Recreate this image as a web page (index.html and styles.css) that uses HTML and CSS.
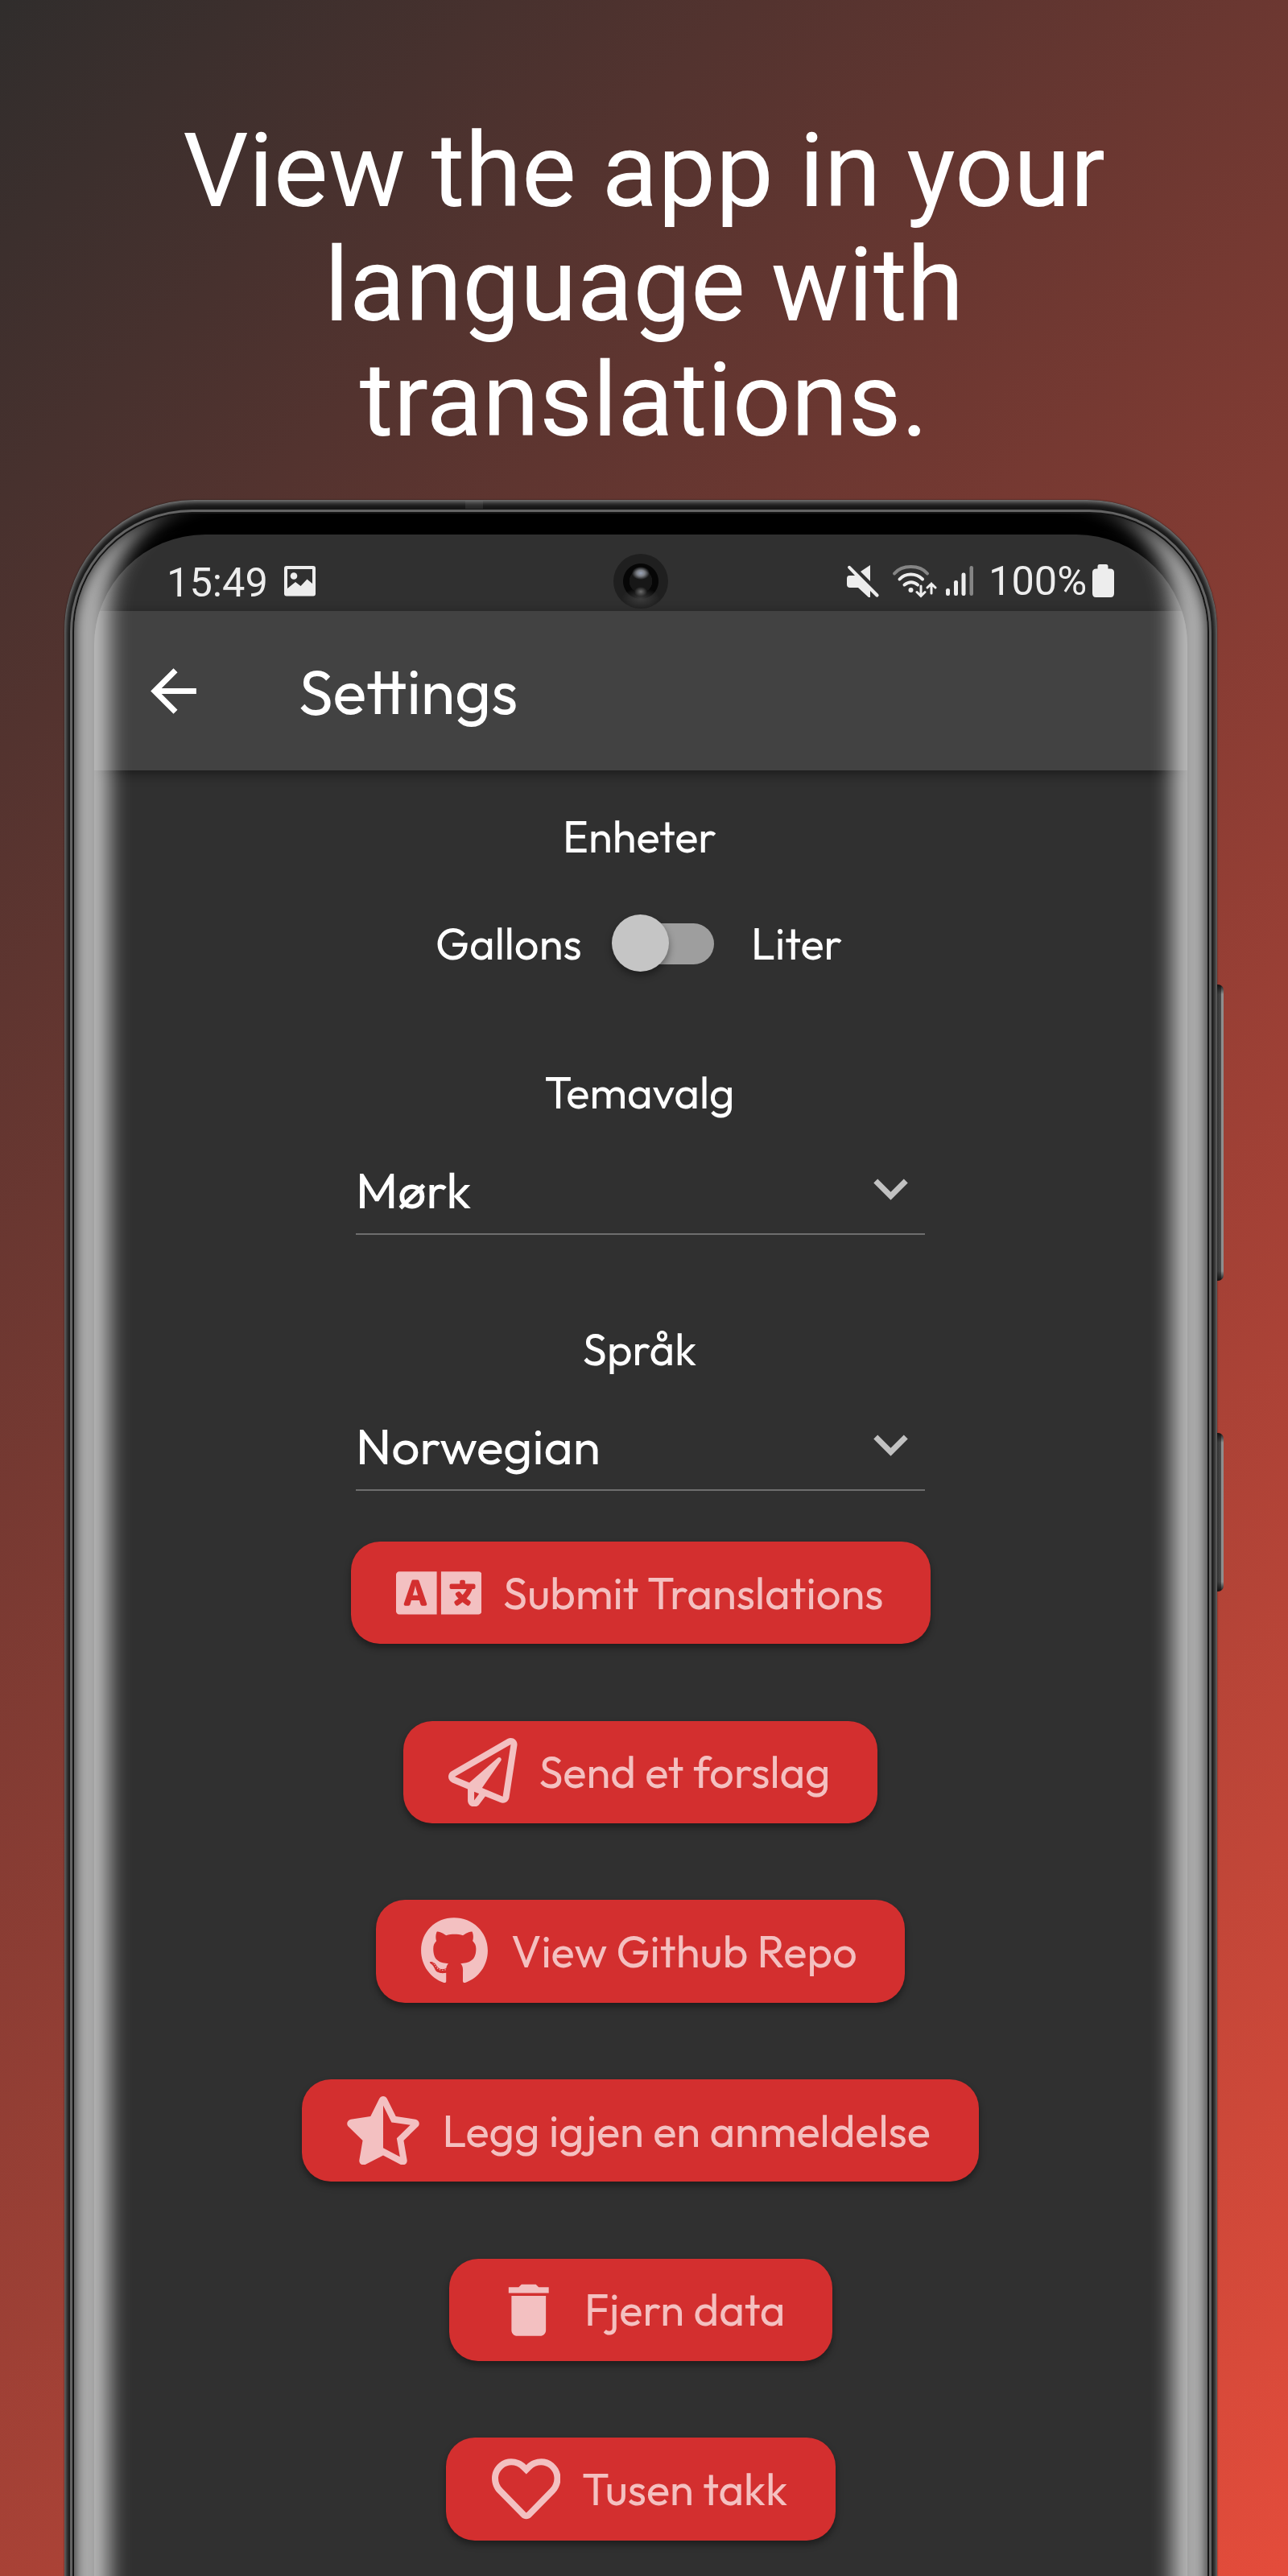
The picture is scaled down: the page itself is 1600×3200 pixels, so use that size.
FILE: index.html
```html
<!DOCTYPE html>
<html lang="no">
<head>
<meta charset="utf-8">
<title>Settings</title>
<link rel="stylesheet" href="styles.css">
</head>
<body>
<main class="page">
  <h1 class="headline">View the app in your<br>language with<br>translations.</h1>

  <div class="phone">
    <i class="antenna"></i>
    <i class="side-key side-key-volume"></i>
    <i class="side-key side-key-power"></i>
    <div class="frame"><div class="rim"><div class="rim-gap"><div class="bezel">
      <div class="screen">
        <header class="status-bar">
          <span class="clock">15:49</span>
          <svg class="status-image" viewBox="0 0 39 38"><path fill-rule="evenodd" d="M3 0h33a3 3 0 0 1 3 3v31.500a3 3 0 0 1-3 3H3a3 3 0 0 1-3-3V3a3 3 0 0 1 3-3zM4 4v24l10-8 6.500 5 8-8.500L35 22V4z"/><circle cx="12" cy="12.500" r="4.300"/></svg>
          <svg class="status-mute" viewBox="0 0 42 42"><path d="M30 1v20L18 9zM4 14h7L2.500 5a1.800 1.800 0 0 1 3-2.500L40 37a1.900 1.900 0 0 1-3 3l-7-7v8h-2L15 29H5q-4 0-4-4v-7q0-4 3-4z"/></svg>
          <svg class="status-wifi" viewBox="0 0 56 42"><g fill="none" stroke="#ededed" stroke-width="4" stroke-linecap="round"><path stroke="#858585" d="M3 11.500Q10 3 23.500 3T44 11.500"/><path d="M9.500 18.500Q15 12.500 23.500 12.500T38 18.500"/><path d="M15.500 25.500Q24 19 32 25.500"/><path stroke-width="3" d="M36 27v12M31 34.500l5 5 5-5M49 36V24M44 29l5-5 5 5"/></g><circle cx="23.500" cy="32" r="3"/></svg>
          <svg class="status-signal" viewBox="0 0 36 38"><rect x="1" y="28" width="5" height="9" rx="2.200"/><rect x="11" y="18" width="5" height="19" rx="2.200"/><rect x="20.500" y="8.500" width="5" height="28.500" rx="2.200"/><rect x="30.500" y="0" width="4.500" height="37" rx="2.200" fill="#858585"/></svg>
          <span class="charge">100%</span>
          <svg class="status-battery" viewBox="0 0 27 41"><path d="M9 0h8q2.500 0 2.500 2.500V5.500H22q5 0 5 4.500v26q0 5-4.500 5h-18Q0 41 0 36V10q0-4.500 5-4.500h1.500V2.500Q6.500 0 9 0z"/></svg>
          <i class="camera"></i>
        </header>

        <nav class="app-bar">
          <svg class="back" viewBox="0 0 24 24"><path d="M20 11H7.830l5.590-5.590L12 4l-8 8 8 8 1.410-1.410L7.830 13H20v-2z"/></svg>
          <span class="app-title">Settings</span>
        </nav>

        <section class="settings">
          <p class="label label-units">Enheter</p>
          <div class="unit-row">
            <span class="unit unit-left">Gallons</span>
            <span class="switch"><i class="thumb"></i></span>
            <span class="unit unit-right">Liter</span>
          </div>

          <p class="label label-theme">Temavalg</p>
          <div class="select">
            <span>Mørk</span>
            <svg class="chevron" viewBox="0 0 24 24"><path d="M16.590 8.590L12 13.170 7.410 8.590 6 10l6 6 6-6z"/></svg>
          </div>

          <p class="label label-language">Språk</p>
          <div class="select">
            <span>Norwegian</span>
            <svg class="chevron" viewBox="0 0 24 24"><path d="M16.590 8.590L12 13.170 7.410 8.590 6 10l6 6 6-6z"/></svg>
          </div>

          <div class="actions">
            <a class="action action-translate">
              <svg class="icon icon-wide" viewBox="0 0 640 512"><path d="M152.100 236.200c-3.500-12.100-7.800-33.200-7.800-33.200h-.5s-4.300 21.100-7.800 33.200l-11.100 37.500H163zM616 96H336v320h280c13.300 0 24-10.700 24-24V120c0-13.300-10.700-24-24-24zm-24 120c0 6.600-5.400 12-12 12h-11.400c-6.900 23.600-21.700 47.400-42.700 69.900 8.400 6.400 17.100 12.500 26.100 18 5.500 3.400 7.300 10.500 4.100 16.200l-7.900 13.900c-3.400 5.900-10.900 7.800-16.700 4.300-12.600-7.800-24.500-16.100-35.400-24.900-10.900 8.700-22.700 17.100-35.400 24.900-5.800 3.500-13.300 1.600-16.700-4.300l-7.900-13.900c-3.200-5.600-1.400-12.800 4.200-16.200 9.300-5.700 18-11.700 26.100-18-7.900-8.400-14.900-17-21-25.700-4-5.700-2.200-13.600 3.700-17.100l6.500-3.900 7.300-4.300c5.400-3.200 12.400-1.700 16 3.400 5 7 10.800 14 17.400 20.900 13.500-14.200 23.800-28.900 30-43.200H412c-6.600 0-12-5.400-12-12v-16c0-6.600 5.400-12 12-12h64v-16c0-6.600 5.400-12 12-12h16c6.600 0 12 5.400 12 12v16h64c6.600 0 12 5.400 12 12zM0 120v272c0 13.300 10.700 24 24 24h280V96H24c-13.300 0-24 10.700-24 24zm58.900 216.100L116.400 167c1.700-4.900 6.200-8.100 11.400-8.100h32.500c5.100 0 9.700 3.300 11.400 8.100l57.500 169.100c2.600 7.800-3.100 15.900-11.400 15.900h-22.900a12 12 0 0 1-11.500-8.600l-9.400-31.900h-60.200l-9.100 31.800c-1.500 5.100-6.200 8.700-11.500 8.700H70.300c-8.200 0-14-8.100-11.400-15.900z"/></svg>
              <span>Submit Translations</span>
            </a>
            <a class="action action-suggest">
              <svg class="icon" viewBox="0 0 512 512"><path d="M440 6.500L24 246.400c-34.400 19.900-31.100 70.800 5.700 85.900L144 379.600V464c0 46.400 59.200 65.500 86.600 28.600l43.800-59.100 111.900 46.200c5.900 2.400 12.100 3.600 18.300 3.600 8.200 0 16.300-2.100 23.600-6.200 12.800-7.200 21.600-20 23.900-34.500l59.400-387.200c6.100-40.100-36.900-68.800-71.500-48.900zM192 464v-64.600l36.600 15.100L192 464zm212.600-28.700l-153.800-63.500L391 169.500c10.700-15.500-9.500-33.500-23.700-21.200L155.800 332.600 48 288 464 48l-59.400 387.300z"/></svg>
              <span>Send et forslag</span>
            </a>
            <a class="action action-github">
              <svg class="icon icon-github" viewBox="0 0 496 512"><path d="M165.900 397.400c0 2-2.300 3.600-5.200 3.600-3.300.3-5.600-1.300-5.600-3.600 0-2 2.300-3.600 5.200-3.600 3-.3 5.600 1.300 5.600 3.600zm-31.100-4.500c-.7 2 1.300 4.300 4.300 4.900 2.600 1 5.600 0 6.200-2s-1.300-4.300-4.300-5.200c-2.600-.7-5.500.3-6.200 2.300zm44.200-1.700c-2.900.7-4.900 2.600-4.600 4.900.3 2 2.900 3.300 5.900 2.600 2.900-.7 4.900-2.600 4.600-4.600-.3-1.900-3-3.200-5.900-2.900zM244.800 8C106.100 8 0 113.300 0 252c0 110.900 69.800 205.800 169.500 239.200 12.800 2.300 17.300-5.600 17.300-12.100 0-6.200-.3-40.400-.3-61.400 0 0-70 15-84.700-29.800 0 0-11.400-29.100-27.800-36.600 0 0-22.900-15.700 1.600-15.400 0 0 24.900 2 38.600 25.800 21.900 38.600 58.600 27.500 72.900 20.900 2.300-16 8.800-27.100 16-33.700-55.900-6.200-112.300-14.300-112.300-110.500 0-27.500 7.600-41.300 23.600-58.900-2.600-6.500-11.100-33.300 2.600-67.900 20.900-6.500 69 27 69 27 20-5.600 41.500-8.500 62.800-8.500s42.800 2.900 62.800 8.500c0 0 48.100-33.600 69-27 13.700 34.700 5.200 61.400 2.600 67.900 16 17.700 25.800 31.500 25.800 58.900 0 96.500-58.900 104.200-114.800 110.500 9.200 7.900 17 22.900 17 46.400 0 33.700-.3 75.400-.3 83.600 0 6.500 4.600 14.400 17.300 12.100C428.200 457.800 496 362.900 496 252 496 113.300 383.500 8 244.800 8zM97.200 352.900c-1.300 1-1 3.300.7 5.200 1.600 1.600 3.900 2.300 5.200 1 1.300-1 1-3.300-.7-5.200-1.600-1.600-3.900-2.300-5.200-1zm-10.800-8.100c-.7 1.300.3 2.900 2.300 3.900 1.600 1 3.600.7 4.300-.7.7-1.300-.3-2.900-2.300-3.900-2-.6-3.600-.3-4.300.7zm32.400 35.600c-1.600 1.300-1 4.300 1.300 6.200 2.300 2.300 5.200 2.600 6.500 1 1.300-1.300.7-4.300-1.300-6.200-2.200-2.300-5.200-2.600-6.500-1zm-11.400-14.700c-1.600 1-1.600 3.600 0 5.900 1.600 2.300 4.300 3.300 5.600 2.300 1.600-1.300 1.600-3.900 0-6.200-1.400-2.300-4-3.300-5.600-2z"/></svg>
              <span>View Github Repo</span>
            </a>
            <a class="action action-review">
              <svg class="icon icon-star" viewBox="0 0 536 512"><path d="M508.550 171.510L362.180 150.200 296.770 17.810C290.890 5.980 279.420 0 267.950 0c-11.400 0-22.790 5.900-28.690 17.810l-65.430 132.380-146.380 21.290c-26.250 3.800-36.770 36.090-17.740 54.590l105.890 103-25.060 145.480C86.980 495.330 103.570 512 122.150 512c4.930 0 10-1.170 14.870-3.750l130.950-68.680 130.940 68.700c4.860 2.550 9.920 3.710 14.830 3.710 18.600 0 35.220-16.610 31.660-37.400l-25.030-145.490 105.910-102.980c19.040-18.500 8.520-50.800-17.730-54.600zm-121.740 123.200l-18.120 17.620 4.280 24.880 19.520 113.450-102.130-53.590-22.380-11.740.03-317.190 51.030 103.290 11.180 22.630 25.010 3.640 114.230 16.630-82.650 80.380z"/></svg>
              <span>Legg igjen en anmeldelse</span>
            </a>
            <a class="action action-clear">
              <svg class="icon" viewBox="0 0 24 24"><path d="M6 19c0 1.100.9 2 2 2h8c1.100 0 2-.9 2-2V7H6v12zM19 4h-3.500l-1-1h-5l-1 1H5v2h14V4z"/></svg>
              <span>Fjern data</span>
            </a>
            <a class="action action-thanks">
              <svg class="icon" viewBox="0 0 512 512"><path d="M458.400 64.300C400.600 15.700 311.300 23 256 79.300 200.700 23 111.400 15.600 53.600 64.300-21.600 127.600-10.600 230.800 43 285.500l175.400 178.700c10 10.200 23.400 15.900 37.600 15.900 14.300 0 27.600-5.600 37.600-15.800L469 285.600c53.500-54.700 64.700-157.900-10.600-221.300zm-23.600 187.500L259.400 430.500c-2.400 2.400-4.400 2.400-6.800 0L77.200 251.800c-36.500-37.200-43.900-107.600 7.300-150.700 38.900-32.700 98.900-27.800 136.500 10.500l35 35.700 35-35.700c37.800-38.500 97.800-43.200 136.500-10.600 51.100 43.100 43.500 113.900 7.300 150.800z"/></svg>
              <span>Tusen takk</span>
            </a>
          </div>
        </section>
      </div>
      <i class="edge-glare"></i>
    </div></div></div></div>
  </div>
</main>
</body>
</html>
```
FILE: styles.css
```css
* { box-sizing: border-box; }

body {
  margin: 0;
  font-family: Outfit, Lato, sans-serif;
  color: #fff;
}

.page {
  width: 1600px;
  height: 3200px;
  overflow: hidden;
  background: linear-gradient(135deg, #302d2c 0%, #e44c3b 100%);
}

.headline {
  height: 621px;
  margin: 0;
  padding-top: 141px;
  font: 400 128px/142.400px Roboto, sans-serif;
  text-align: center;
}

/* Device shell */
.phone {
  position: relative;
  width: 1432px;
  height: 2800px;
  margin-left: 80px;
}

.frame {
  height: 100%;
  padding: 12px 7px 0;
  border-radius: 162px 162px 0 0;
  background: #161616;
  box-shadow: inset 0 1px 7px 1px #979797, 0 0 2px rgba(0, 0, 0, .6);
}

.rim {
  height: 100%;
  padding: 3px 3px 0;
  border-radius: 152px 152px 0 0;
  background: #646464;
}

.rim-gap {
  height: 100%;
  padding: 2px 2px 0;
  border-radius: 149px 149px 0 0;
  background: #141414;
}

.bezel {
  position: relative;
  height: 100%;
  padding: 26px 25px 0;
  border-radius: 147px 147px 0 0;
  background: #000;
}

.screen {
  height: 100%;
  overflow: hidden;
  border-radius: 138px 138px 0 0;
  background: #303030;
}

.edge-glare {
  position: absolute;
  inset: 0;
  border-radius: 147px 147px 0 0;
  box-shadow:
    inset 0 0 16px 1px rgba(0, 0, 0, .75),
    inset 44px -26px 26px rgba(236, 236, 236, .73),
    inset -44px -26px 26px rgba(236, 236, 236, .73);
}

.antenna {
  position: absolute;
  top: 1px;
  left: 498px;
  width: 22px;
  height: 10px;
  background: rgba(150, 150, 150, .14);
}

.side-key {
  position: absolute;
  left: 1432px;
  width: 8px;
  border-radius: 0 7px 7px 0;
  background:
    linear-gradient(#111, transparent 12px, transparent calc(100% - 12px), #111),
    linear-gradient(90deg, #333, #4c4c4c 5px, #8e8e8e 5.500px);
}

.side-key-volume { top: 602px; height: 368px; }
.side-key-power { top: 1159px; height: 197px; }

/* Status bar */
.status-bar {
  position: relative;
  display: flex;
  height: 95px;
  padding-left: 90px;
  fill: #ededed;
}

.clock, .charge {
  color: #ededed;
  font: 400 50.500px/60px Roboto, sans-serif;
}

.clock { width: 146px; margin-top: 30px; }
.charge { width: 129px; margin-top: 28px; }
.status-image { width: 39px; height: 38px; margin-top: 39px; }
.status-mute { width: 42px; height: 42px; margin: 37px 15px 0 659px; }
.status-wifi { width: 56px; height: 42px; margin: 37px 10px 0 0; }
.status-signal { width: 36px; height: 38px; margin: 39px 18px 0 0; }
.status-battery { width: 27px; height: 41px; margin-top: 37px; }

.camera {
  position: absolute;
  top: 24px;
  left: 645px;
  width: 68px;
  height: 68px;
  border-radius: 50%;
  background:
    radial-gradient(ellipse 11px 8px at 50% 24px, #99a3b8, #7d8086 45%, transparent),
    radial-gradient(ellipse 8px 6px at 50% 47px, #6c6c6c, transparent),
    radial-gradient(circle at 50% 34px, #171717 14px, transparent 14.500px),
    radial-gradient(ellipse 24px 14px at 50% 56px, #3c3c3c, transparent),
    radial-gradient(circle at 50% 34px, #060606 21.500px, transparent 22.500px),
    #1f1f1f;
}

/* App bar */
.app-bar {
  position: relative;
  display: flex;
  align-items: center;
  height: 198px;
  padding-left: 56px;
  background: #424242;
  box-shadow: 0 4px 14px rgba(0, 0, 0, .45);
}

.back { width: 85px; height: 85px; margin-right: 113px; fill: #fff; }
.app-title { font-size: 77.500px; line-height: 196px; }

/* Settings list */
.settings { padding-top: 52px; }

.label {
  margin: 0;
  padding-right: 3px;
  font-size: 54.400px;
  line-height: 60px;
  text-align: center;
}

.label-theme { margin-top: 119px; }
.label-language { margin-top: 112px; }

.unit-row {
  display: flex;
  height: 72px;
  margin-top: 67px;
  padding-left: 424px;
  font-size: 54.400px;
  line-height: 72px;
}

.unit-left { width: 229px; }

.switch {
  position: relative;
  width: 117px;
  height: 51px;
  margin: 11px 46px 0 0;
  border-radius: 26px;
  background: #9e9e9e;
}

.thumb {
  position: absolute;
  top: -11px;
  left: -10px;
  width: 71px;
  height: 71px;
  border-radius: 50%;
  background: #c5c5c5;
  box-shadow: 0 5px 10px rgba(0, 0, 0, .4);
}

.select {
  display: flex;
  justify-content: space-between;
  width: 707px;
  height: 96px;
  margin: 51px 0 0 325px;
  border-bottom: 2px solid #6e6e6e;
  font-size: 62.300px;
  line-height: 81px;
}

.label-language + .select { margin-top: 50px; }
.chevron { width: 85px; height: 85px; margin: -4px 0 0; fill: #c1c1c1; }

.actions {
  display: flex;
  flex-direction: column;
  align-items: center;
  gap: 95.500px;
  margin-top: 63px;
  padding-right: 1px;
}

.action {
  display: flex;
  flex: none;
  align-items: center;
  gap: 27px;
  height: 127.200px;
  padding-left: 56px;
  border-radius: 36px;
  background: #d32f2f;
  box-shadow: 0 5px 9px rgba(0, 0, 0, .4);
  color: #f4c0c0;
  font-size: 54.400px;
  line-height: 126px;
  white-space: nowrap;
}

.action-translate { width: 720px; }
.action-suggest { width: 589px; }
.action-github { width: 657px; gap: 29px; }
.action-review { width: 841px; gap: 28.500px; }
.action-clear { width: 476px; }
.action-thanks { width: 484px; padding-left: 57px; }

.icon { width: 85.500px; height: 85.500px; fill: #f3c0c1; }
.icon-wide { width: 106.500px; }
.icon-github { width: 83px; }
.icon-star { width: 90px; }
```
